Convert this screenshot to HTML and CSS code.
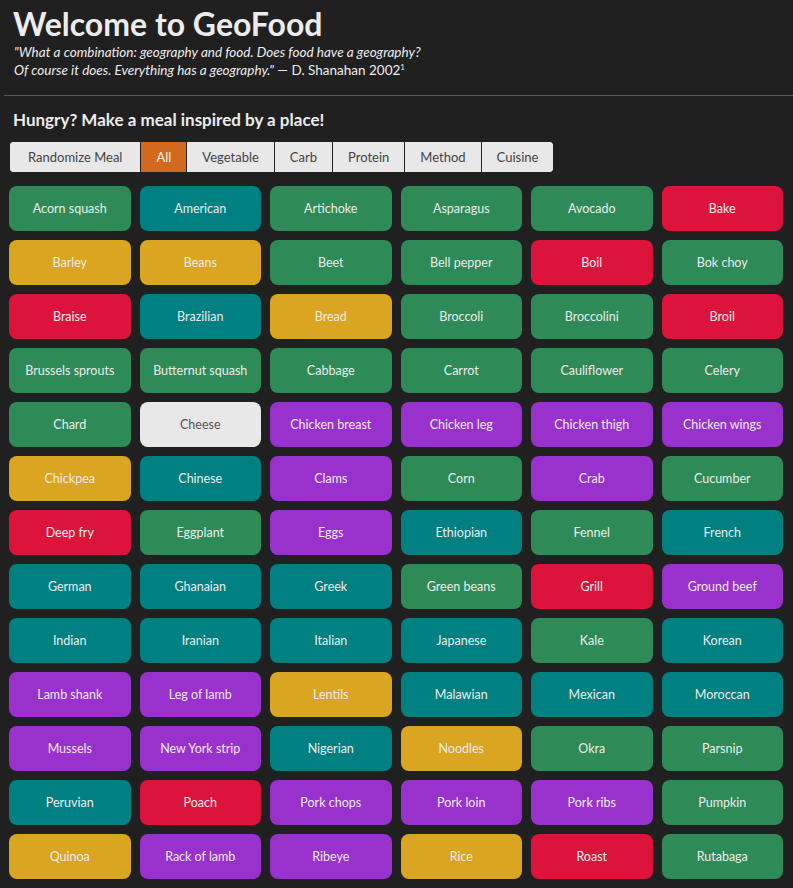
FILE: index.html
```html
<!DOCTYPE html>
<html>
<head>
<meta charset="utf-8">
<link rel="stylesheet" href="styles.css">
</head>
<body>
<header class="header">
  <h1 class="title">Welcome to GeoFood</h1>
  <p class="quote"><em>"What a combination: geography and food. Does food have a geography?<br>Of course it does. Everything has a geography."</em> — D. Shanahan 2002<sup>1</sup></p>
</header>
<hr class="rule">
<main class="main">
  <h2 class="subtitle">Hungry? Make a meal inspired by a place!</h2>
  <nav class="filters">
    <button class="filter">Randomize Meal</button>
    <button class="filter active">All</button>
    <button class="filter">Vegetable</button>
    <button class="filter">Carb</button>
    <button class="filter">Protein</button>
    <button class="filter">Method</button>
    <button class="filter">Cuisine</button>
  </nav>
  <div class="grid">
    <button class="item veg">Acorn squash</button>
    <button class="item cui">American</button>
    <button class="item veg">Artichoke</button>
    <button class="item veg">Asparagus</button>
    <button class="item veg">Avocado</button>
    <button class="item met">Bake</button>

    <button class="item carb">Barley</button>
    <button class="item carb">Beans</button>
    <button class="item veg">Beet</button>
    <button class="item veg">Bell pepper</button>
    <button class="item met">Boil</button>
    <button class="item veg">Bok choy</button>

    <button class="item met">Braise</button>
    <button class="item cui">Brazilian</button>
    <button class="item carb">Bread</button>
    <button class="item veg">Broccoli</button>
    <button class="item veg">Broccolini</button>
    <button class="item met">Broil</button>

    <button class="item veg">Brussels sprouts</button>
    <button class="item veg">Butternut squash</button>
    <button class="item veg">Cabbage</button>
    <button class="item veg">Carrot</button>
    <button class="item veg">Cauliflower</button>
    <button class="item veg">Celery</button>

    <button class="item veg">Chard</button>
    <button class="item dairy">Cheese</button>
    <button class="item pro">Chicken breast</button>
    <button class="item pro">Chicken leg</button>
    <button class="item pro">Chicken thigh</button>
    <button class="item pro">Chicken wings</button>

    <button class="item carb">Chickpea</button>
    <button class="item cui">Chinese</button>
    <button class="item pro">Clams</button>
    <button class="item veg">Corn</button>
    <button class="item pro">Crab</button>
    <button class="item veg">Cucumber</button>

    <button class="item met">Deep fry</button>
    <button class="item veg">Eggplant</button>
    <button class="item pro">Eggs</button>
    <button class="item cui">Ethiopian</button>
    <button class="item veg">Fennel</button>
    <button class="item cui">French</button>

    <button class="item cui">German</button>
    <button class="item cui">Ghanaian</button>
    <button class="item cui">Greek</button>
    <button class="item veg">Green beans</button>
    <button class="item met">Grill</button>
    <button class="item pro">Ground beef</button>

    <button class="item cui">Indian</button>
    <button class="item cui">Iranian</button>
    <button class="item cui">Italian</button>
    <button class="item cui">Japanese</button>
    <button class="item veg">Kale</button>
    <button class="item cui">Korean</button>

    <button class="item pro">Lamb shank</button>
    <button class="item pro">Leg of lamb</button>
    <button class="item carb">Lentils</button>
    <button class="item cui">Malawian</button>
    <button class="item cui">Mexican</button>
    <button class="item cui">Moroccan</button>

    <button class="item pro">Mussels</button>
    <button class="item pro">New York strip</button>
    <button class="item cui">Nigerian</button>
    <button class="item carb">Noodles</button>
    <button class="item veg">Okra</button>
    <button class="item veg">Parsnip</button>

    <button class="item cui">Peruvian</button>
    <button class="item met">Poach</button>
    <button class="item pro">Pork chops</button>
    <button class="item pro">Pork loin</button>
    <button class="item pro">Pork ribs</button>
    <button class="item veg">Pumpkin</button>

    <button class="item carb">Quinoa</button>
    <button class="item pro">Rack of lamb</button>
    <button class="item pro">Ribeye</button>
    <button class="item carb">Rice</button>
    <button class="item met">Roast</button>
    <button class="item veg">Rutabaga</button>
  </div>
</main>
</body>
</html>
```

FILE: styles.css
```css
html, body {
  margin: 0;
  padding: 0;
}
body {
  background: #202020;
  color: #ececec;
  font-family: "Lato", "Open Sans", sans-serif;
}
.header {
  padding: 5px 13px 0 13px;
}
.title {
  margin: 0;
  font-size: 32px;
  font-weight: 700;
  line-height: 38px;
  color: #ececec;
}
.quote {
  margin: 0 0 0 1px;
  font-size: 13.5px;
  line-height: 18px;
}
.quote sup {
  font-size: 8px;
  line-height: 0;
}
.rule {
  margin: 16px 0 0 4px;
  border: 0;
  border-top: 1px solid #5a5a5a;
  height: 0;
}
.main {
  padding: 0 10px 8px 9px;
}
.subtitle {
  margin: 12px 0 0 4px;
  font-size: 17px;
  line-height: 24px;
  font-weight: 700;
  color: #ececec;
}
.filters {
  display: inline-flex;
  margin: 10px 0 0 1px;
  background: #e8e8e8;
  border-radius: 4px;
  overflow: hidden;
  height: 30px;
}
.filter {
  font-family: inherit;
  font-size: 13px;
  color: #444;
  background: #e8e8e8;
  border: 0;
  border-left: 1px solid #222;
  padding: 0 15px;
  margin: 0;
}
.filter:first-child {
  border-left: 0;
  padding: 0 18px;
}
.filter.active {
  background: #d2691e;
  color: #f3f3f3;
}
.grid {
  display: grid;
  grid-template-columns: repeat(6, 1fr);
  gap: 9px;
  margin-top: 14px;
}
.item {
  height: 45px;
  border: 0;
  border-radius: 8px;
  font-family: inherit;
  font-size: 12.5px;
  color: #ececec;
  padding: 0 4px;
}
.veg { background: #2e8b57; }
.cui { background: #008080; }
.carb { background: #daa520; }
.met { background: #dc143c; }
.pro { background: #9932cc; }
.dairy { background: #e8e8e8; color: #555; }
```
